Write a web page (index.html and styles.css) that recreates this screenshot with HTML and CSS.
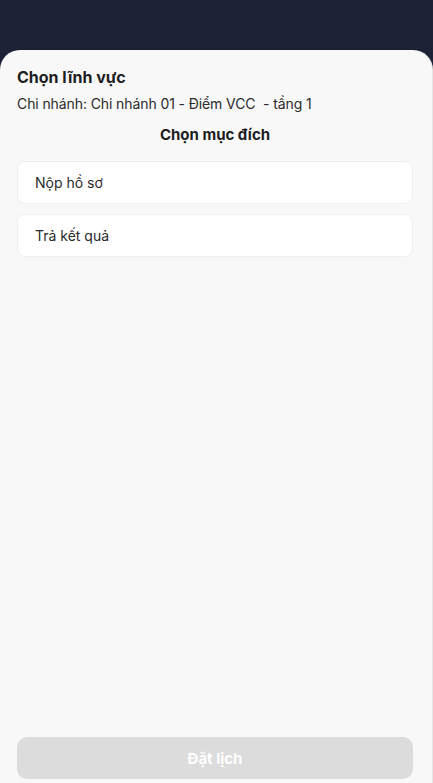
FILE: index.html
```html
<!DOCTYPE html>
<html lang="vi">
<head>
<meta charset="utf-8">
<title>Chọn lĩnh vực</title>
<link rel="stylesheet" href="styles.css">
</head>
<body>
<div class="app">
  <div class="topband"></div>
  <div class="sheet">
    <div class="header">
      <h1 class="title">Chọn lĩnh vực</h1>
      <p class="branch">Chi nhánh: Chi nhánh 01 - Điểm VCC &nbsp;- tầng 1</p>
      <h2 class="subtitle">Chọn mục đích</h2>
    </div>
    <div class="list">
      <div class="item">Nộp hồ sơ</div>
      <div class="item">Trả kết quả</div>
    </div>
    <div class="footer">
      <button class="btn" disabled>Đặt lịch</button>
    </div>
  </div>
</div>
</body>
</html>
```

FILE: styles.css
```css
html, body {
  margin: 0;
  padding: 0;
  height: 100%;
}
body {
  background: #1b2236;
  font-family: "Inter", "Noto Sans", "Liberation Sans", sans-serif;
  color: #1d1d1f;
}
.app {
  display: flex;
  flex-direction: column;
  height: 783px;
}
.topband {
  height: 50px;
  flex: none;
  background: #1b2236;
}
.sheet {
  flex: 1;
  display: flex;
  flex-direction: column;
  background: #f8f8f8;
  border-radius: 20px 20px 0 0;
  padding: 0 19px 4px 17px;
  border-right: 1px solid #e6e6e6;
}
.header {
  padding-top: 17px;
}
.title {
  margin: 0;
  font-size: 16px;
  font-weight: 700;
  line-height: 20px;
  color: #1d1d1f;
}
.branch {
  margin: 7px 0 0;
  font-size: 14px;
  letter-spacing: -0.1px;
  line-height: 20px;
  color: #2a2a2a;
}
.subtitle {
  margin: 11px 0 0;
  text-align: center;
  font-size: 15px;
  font-weight: 700;
  line-height: 20px;
  color: #1d1d1f;
}
.list {
  display: flex;
  flex-direction: column;
  gap: 10px;
  margin-top: 16px;
}
.item {
  background: #ffffff;
  border: 1px solid #efefef;
  border-radius: 8px;
  height: 41px;
  display: flex;
  align-items: center;
  padding-left: 17px;
  font-size: 14px;
  color: #2a2a2a;
}
.footer {
  margin-top: auto;
}
.btn {
  width: 100%;
  height: 42px;
  border: none;
  border-radius: 10px;
  background: #dcdcdc;
  color: #ffffff;
  font-family: inherit;
  font-size: 15px;
  font-weight: 700;
}
```
